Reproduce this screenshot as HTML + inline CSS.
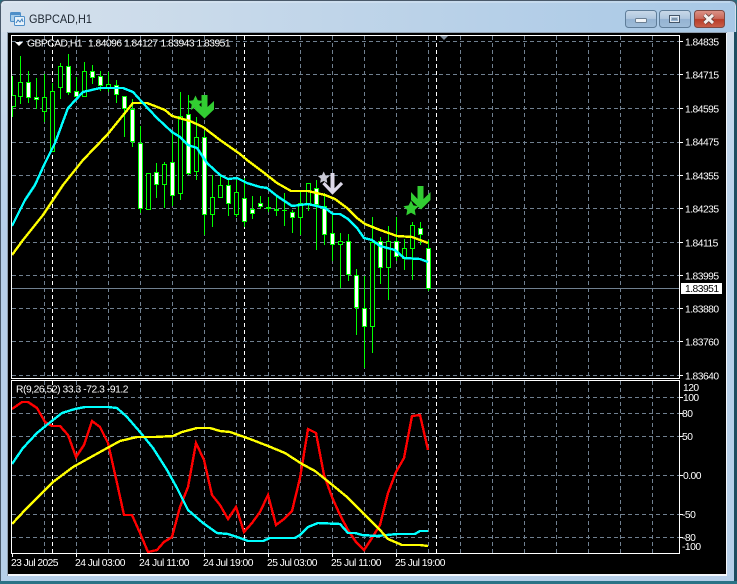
<!DOCTYPE html>
<html><head><meta charset="utf-8"><style>
html,body{margin:0;padding:0;background:#000}
svg{display:block}
text{font-family:"Liberation Sans",sans-serif;font-size:10.3px;fill:#fff;letter-spacing:-.52px}
.c{shape-rendering:crispEdges}
</style></head><body>
<svg width="737" height="584" viewBox="0 0 737 584" xmlns="http://www.w3.org/2000/svg">
<defs>
<linearGradient id="tb" x1="0" x2="1" y1="0" y2="0"><stop offset="0" stop-color="#d6e1ec"/><stop offset=".45" stop-color="#c0d5e9"/><stop offset="1" stop-color="#a8c8e6"/></linearGradient>
<linearGradient id="ls" x1="0" x2="0" y1="0" y2="1"><stop offset="0" stop-color="#d6e1ec"/><stop offset=".2" stop-color="#c3d7ec"/><stop offset=".4" stop-color="#b6cfe9"/><stop offset="1" stop-color="#b6cfe9"/></linearGradient>
<linearGradient id="bb" x1="0" x2="0" y1="0" y2="1"><stop offset="0" stop-color="#c9d9e9"/><stop offset=".48" stop-color="#afc6de"/><stop offset=".52" stop-color="#94b3d2"/><stop offset="1" stop-color="#9fbcd8"/></linearGradient>
<linearGradient id="rb" x1="0" x2="0" y1="0" y2="1"><stop offset="0" stop-color="#dc9488"/><stop offset=".48" stop-color="#c9685a"/><stop offset=".52" stop-color="#b83c28"/><stop offset="1" stop-color="#c9604a"/></linearGradient>
</defs>
<!-- window chrome -->
<rect width="737" height="584" fill="#2a6b7c"/>
<path d="M0 584V6Q0 1 5 1H730Q736 1 736 6V584Z" fill="url(#ls)"/>
<path d="M5 0.5H730Q736 .5 736.5 6" fill="none" stroke="#49596a"/>
<path d="M.5 581V6Q.5 .5 5 .5" fill="none" stroke="#49596a"/>
<path d="M1 6Q1 1 5 1H730Q735 1 735 6V32H1Z" fill="url(#tb)"/>
<path d="M2 6Q2 2 5 2H730" fill="none" stroke="#e6eef6" stroke-opacity=".7"/>
<rect x="734" y="32" width="3" height="552" fill="#1d4d60"/>
<rect x="0" y="581" width="737" height="3" fill="#2a7386"/>
<rect x="7" y="32" width="720" height="544" fill="#f4f7fb"/>
<rect x="7" y="32" width="720" height="1" fill="#8f9eae"/>
<rect x="7" y="32" width="1" height="544" fill="#8f9eae"/>
<rect x="8" y="33" width="718" height="541" fill="#000"/>
<!-- title -->
<g>
<rect x="10.5" y="12.5" width="10" height="9" rx="1" fill="#a8cdea" stroke="#4f8fc8"/>
<rect x="14.5" y="16.5" width="10" height="9" rx="1" fill="#e8f2fa" stroke="#4f8fc8"/>
<rect x="11" y="13" width="9" height="2" fill="#4f8fc8"/>
<path d="M16 23l2-3 2 2 2-3 1 3" fill="none" stroke="#3d7fbd"/>
</g>
<text x="29" y="23" textLength="63" lengthAdjust="spacingAndGlyphs" style="font-size:12px;fill:#1c2530;letter-spacing:0">GBPCAD,H1</text>
<!-- buttons -->
<rect x="625.5" y="10.5" width="31" height="17" rx="3" fill="url(#bb)" stroke="#5f7d99"/>
<rect x="635.5" y="18.5" width="11" height="4" rx="1" fill="#f2f5f8" stroke="#6c7f92"/>
<rect x="659.5" y="10.5" width="31" height="17" rx="3" fill="url(#bb)" stroke="#5f7d99"/>
<rect x="669.5" y="15.5" width="10" height="7" fill="none" stroke="#44566a"/>
<rect x="670.5" y="16.5" width="8" height="5" fill="none" stroke="#e6edf4"/>
<rect x="672" y="18" width="5" height="2" fill="#7d93a8"/>
<rect x="694.5" y="10.5" width="30" height="17" rx="3" fill="url(#rb)" stroke="#7d4a44"/>
<path d="M704.5 15L713 23M713 15L704.5 23" stroke="#5a3834" stroke-width="4.5"/>
<path d="M704.5 15L713 23M713 15L704.5 23" stroke="#f4f0ee" stroke-width="3"/>

<!-- grid -->
<g class="c" fill="none" stroke="#708090" stroke-dasharray="4 3">
<path d="M12 41.5H679M12 74.5H679M12 108.5H679M12 142.5H679M12 175.5H679M12 208.5H679M12 242.5H679M12 275.5H679M12 308.5H679M12 341.5H679M12 375.5H679"/>
<path d="M44.5 36V378M76.5 36V378M108.5 36V378M140.5 36V378M172.5 36V378M204.5 36V378M236.5 36V378M268.5 36V378M300.5 36V378M332.5 36V378M364.5 36V378M396.5 36V378M428.5 36V378M460.5 36V378M492.5 36V378M524.5 36V378M556.5 36V378M588.5 36V378M620.5 36V378M652.5 36V378"/>
<path d="M12 397.5H679M12 413.5H679M12 436.5H679M12 475.5H679M12 514.5H679M12 537.5H679"/>
<path d="M44.5 381V553M76.5 381V553M108.5 381V553M140.5 381V553M172.5 381V553M204.5 381V553M236.5 381V553M268.5 381V553M300.5 381V553M332.5 381V553M364.5 381V553M396.5 381V553M428.5 381V553M460.5 381V553M492.5 381V553M524.5 381V553M556.5 381V553M588.5 381V553M620.5 381V553M652.5 381V553"/>
</g>
<g class="c" fill="none" stroke="#fff" stroke-dasharray="4 3">
<path d="M52.5 36V378M244.5 36V378M436.5 36V378M52.5 381V553M244.5 381V553M436.5 381V553"/>
</g>
<path class="c" d="M12 288.5H679" stroke="#708090" fill="none"/>

<!-- arrows -->
<path d="M201.5 95H207.5V107L214 101V109.5L204.5 118.5L195 109.5V101L201.5 107Z" fill="#32cd32"/>
<path d="M195.5 95.5L197.8 100.3L203 101L199.3 104.6L200.2 110L195.5 107.4L190.8 110L191.7 104.6L188 101L193.2 100.3Z" fill="#32cd32"/>
<path d="M417.5 186H423.5V199L430.5 192V200L421 209.5L411 200V192L417.5 199Z" fill="#32cd32"/>
<path d="M411 200.5L413.4 205.4L418.6 206.2L414.8 210L415.7 215.4L411 212.8L406.3 215.4L407.2 210L403.4 206.2L408.6 205.4Z" fill="#32cd32"/>
<path d="M332.5 173V192" stroke="#dcd8e8" stroke-width="4" fill="none"/>
<path d="M323.5 183L332.5 192.5L342 183" stroke="#dcd8e8" stroke-width="3.2" fill="none"/>
<path d="M323.7 171.5L325.5 175.3L329.6 175.9L326.6 178.8L327.3 182.9L323.7 181L320.1 182.9L320.8 178.8L317.8 175.9L321.9 175.3Z" fill="#c8c8d4"/>

<!-- candles -->
<g class="c">
<path fill="none" stroke="#0f0" d="M12.5 76V117M20.5 56V104M28.5 71V103M36.5 78V109M44.5 74V122M52.5 83V151M60.5 63V99M68.5 54V95M76.5 77V99M84.5 62V97M92.5 65V84M100.5 71V91M108.5 72V92M116.5 80V103M124.5 96V137M132.5 99V147M140.5 126V213M148.5 173V210M156.5 163V198M164.5 162V208M172.5 132V206M180.5 92V200M188.5 95V175M196.5 117V180M204.5 131V235M212.5 175V227M220.5 175V198M228.5 180V216M236.5 180V217M244.5 178V227M252.5 196V219M260.5 196V209M268.5 197V212M276.5 197V216M284.5 193V226M292.5 210V233M300.5 192V235M308.5 183V211M316.5 180V250M324.5 193V245M332.5 213V261M340.5 233V288M348.5 234V281M356.5 269V335M364.5 276V368M372.5 217V353M380.5 237V284M388.5 226V300M396.5 217V261M404.5 239V270M412.5 222V280M420.5 222V245M428.5 240V291"/>
<path fill="#000" stroke="#0f0" d="M18.5 82.5h4v14h-4zM42.5 97.5h4v14h-4zM50.5 91.5h4v60h-4zM58.5 66.5h4v21h-4zM82.5 71.5h4v25h-4zM106.5 84.5h4v3h-4zM146.5 173.5h4v36h-4zM162.5 164.5h4v20h-4zM178.5 116.5h4v77h-4zM194.5 137.5h4v34h-4zM210.5 197.5h4v17h-4zM218.5 185.5h4v12h-4zM234.5 192.5h4v22h-4zM298.5 203.5h4v14h-4zM306.5 183.5h4v20h-4zM338.5 241.5h4v3h-4zM370.5 242.5h4v84h-4zM386.5 241.5h4v26h-4zM402.5 248.5h4v10h-4zM410.5 225.5h4v23h-4z"/>
<path fill="#fff" stroke="#0f0" d="M26.5 82.5h4v15h-4zM34.5 97.5h4v2h-4zM66.5 66.5h4v26h-4zM74.5 91.5h4v5h-4zM90.5 71.5h4v6h-4zM98.5 76.5h4v9h-4zM114.5 85.5h4v9h-4zM122.5 96.5h4v12h-4zM130.5 109.5h4v32h-4zM138.5 143.5h4v65h-4zM154.5 172.5h4v12h-4zM170.5 162.5h4v33h-4zM186.5 114.5h4v59h-4zM202.5 137.5h4v77h-4zM226.5 185.5h4v18h-4zM242.5 198.5h4v23h-4zM250.5 209.5h4v4h-4zM258.5 203.5h4v3h-4zM266.5 207.5h4v1h-4zM274.5 209.5h4v1h-4zM290.5 212.5h4v5h-4zM314.5 188.5h4v16h-4zM322.5 206.5h4v28h-4zM330.5 233.5h4v11h-4zM346.5 241.5h4v33h-4zM354.5 275.5h4v32h-4zM362.5 308.5h4v18h-4zM378.5 241.5h4v26h-4zM394.5 241.5h4v15h-4zM418.5 228.5h4v6h-4zM426.5 248.5h4v40h-4z"/>
<path stroke="#0f0" d="M282 210.5H287"/>
<rect x="12" y="95" width="3" height="12" fill="#000"/>
<path fill="none" stroke="#0f0" d="M12 95.5H15.5V106.5H12"/>
</g>

<!-- MAs -->
<g class="c" fill="none" stroke-width="2.4">
<polyline stroke="#ffff00" points="12,255 23,240 43,215 63,185 83,160 107,135 133,103 147,103 165,110 172,116 190,121 203,127 220,140 240,154 247,160 263,172 277,183 291,191 308,191 325,195 335,199 347,208 357,218 365,224 380,230 397,236 412,237 428,243"/>
<polyline stroke="#00ffff" points="12,226 25,200 35,185 45,163 55,143 68,108 83,92 100,88 123,88 133,92 142,102 157,118 172,132 180,137 188,145 197,148 207,163 220,175 228,179 237,178 247,183 260,187 267,188 277,196 292,206 308,204 325,208 333,214 340,214 348,219 357,228 364,238 372,240 380,246 395,250 404,258 420,259 428,262"/>
<polyline stroke="#ff0000" points="12,409 22,402 28,402 37,408 45,422 52,426 60,426 68,435 76,457 84,445 92,421 100,427 108,443 117,483 124,515 132,515 140,533 148,552 157,550 164,542 172,537 180,507 188,487 196,443 204,460 212,495 220,505 228,519 236,507 244,532 252,523 260,512 268,495 276,525 284,519 292,511 300,478 308,429 316,433 324,475 332,497 340,515 348,530 356,542 364,550 372,538 380,525 388,493 396,472 404,458 412,416 420,415 428,450"/>
<polyline stroke="#00ffff" points="12,464 23,448 37,433 48,424 62,413 75,409 85,407 108,407 117,408 127,417 140,432 153,448 167,470 177,488 188,510 203,523 217,533 228,534 240,538 248,541 263,541 270,538 295,538 300,535 308,527 318,523 340,524 348,533 355,533 362,535 377,536 397,534 415,534 420,531 428,531"/>
<polyline stroke="#ffff00" points="12,524 25,510 40,495 53,482 73,467 100,452 120,441 137,437 155,437 173,436 182,432 197,428 210,428 220,431 230,432 250,439 268,446 285,453 302,464 315,471 330,483 347,497 363,513 380,530 388,539 402,545 420,545 428,546"/>
</g>

<!-- frames & ticks -->
<g class="c" fill="none" stroke="#fff">
<rect x="11.5" y="35.5" width="668" height="343"/>
<rect x="11.5" y="380.5" width="668" height="173"/>
<path d="M680 41.5h3M680 74.5h3M680 108.5h3M680 142.5h3M680 175.5h3M680 208.5h3M680 242.5h3M680 275.5h3M680 308.5h3M680 341.5h3M680 375.5h3M680 397.5h3M680 413.5h3M680 436.5h3M680 475.5h3M680 514.5h3M680 537.5h3"/>
<path d="M12.5 554v3M76.5 554v3M140.5 554v3M204.5 554v3M268.5 554v3M332.5 554v3M396.5 554v3"/>
</g>
<path d="M440 36h8l-4 4z" fill="#7f8c99"/>

<!-- legend -->
<path d="M15 42h8l-4 4z" fill="#fff"/>
<text x="27" y="46.5" textLength="55">GBPCAD,H1</text>
<text x="88" y="46.5">1.84096</text>
<text x="124" y="46.5">1.84127</text>
<text x="160.5" y="46.5">1.83943</text>
<text x="196.5" y="46.5">1.83951</text>
<text x="16" y="392.5" textLength="112">R(9,26,52) 33.3 -72.3 -91.2</text>

<!-- price axis -->
<text x="685" y="45.5">1.84835</text>
<text x="685" y="78.5">1.84715</text>
<text x="685" y="112.5">1.84595</text>
<text x="685" y="145.5">1.84475</text>
<text x="685" y="179.5">1.84355</text>
<text x="685" y="212.5">1.84235</text>
<text x="685" y="246.5">1.84115</text>
<text x="685" y="279.5">1.83995</text>
<text x="685" y="312.5">1.83880</text>
<text x="685" y="345.5">1.83760</text>
<text x="685" y="379.5">1.83640</text>
<rect x="681" y="283" width="41" height="11" fill="#fff"/>
<text x="685" y="292" style="fill:#000">1.83951</text>
<text x="683" y="391">120</text>
<text x="683" y="401">100</text>
<text x="682" y="417">80</text>
<text x="682" y="440">50</text>
<text x="683" y="479">0.00</text>
<text x="682" y="518">-50</text>
<text x="682" y="541">-80</text>
<text x="682" y="550">-100</text>

<!-- time axis -->
<text x="11" y="566" textLength="47">23 Jul 2025</text>
<text x="75" y="566" textLength="50">24 Jul 03:00</text>
<text x="139" y="566" textLength="50">24 Jul 11:00</text>
<text x="203" y="566" textLength="50">24 Jul 19:00</text>
<text x="267" y="566" textLength="50">25 Jul 03:00</text>
<text x="331" y="566" textLength="50">25 Jul 11:00</text>
<text x="395" y="566" textLength="50">25 Jul 19:00</text>
</svg>
</body></html>
